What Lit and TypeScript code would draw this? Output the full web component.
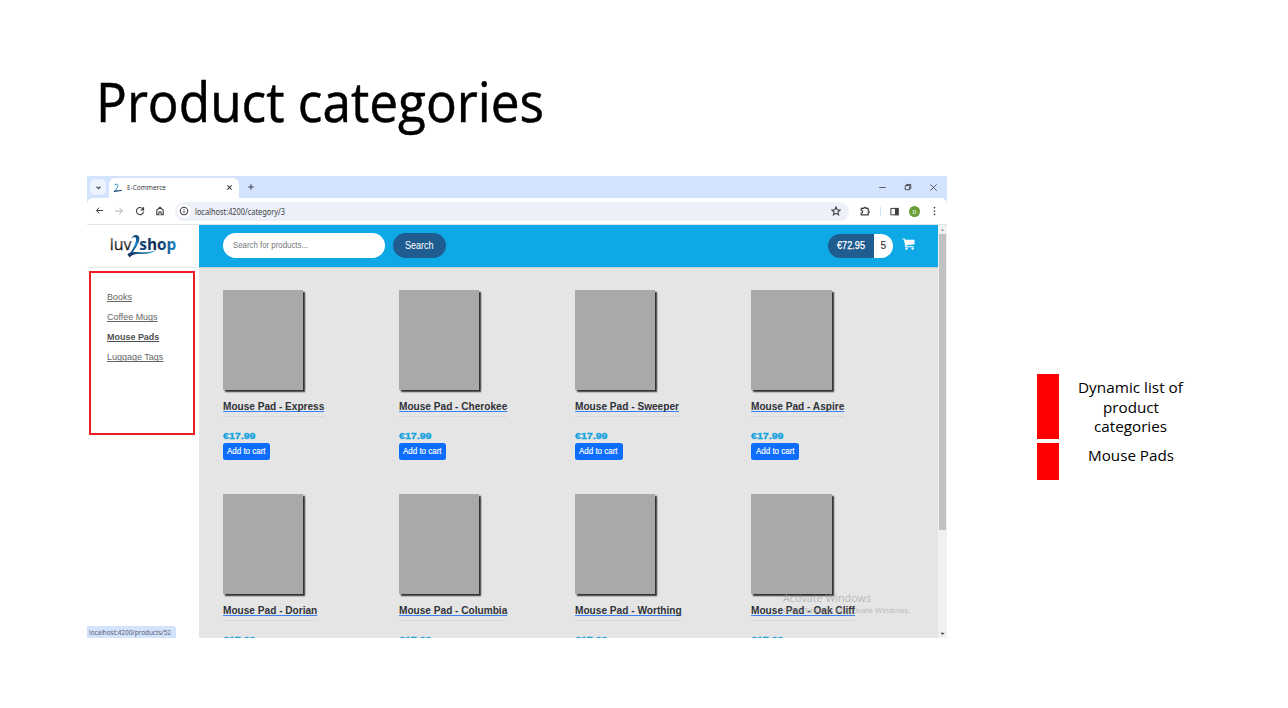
import { LitElement, html, css, svg } from "lit";
import { customElement, property } from "lit/decorators.js";

/** One line of text, condensed or widened to a known width. */
@customElement("fit-text")
class FitText extends LitElement {
  @property() text = "";
  @property({ type: Number }) width = 0;
  static styles = css`
    :host { display: inline-block; vertical-align: top; white-space: nowrap; }
    .t { display: inline-block; transform-origin: 0 50%; text-decoration: inherit; }
  `;
  updated() {
    this.style.width = this.width + "px";
    const t = this.renderRoot.querySelector(".t") as HTMLElement;
    t.style.transform = "none";
    const w = t.getBoundingClientRect().width;
    if (w) t.style.transform = `scaleX(${this.width / w})`;
  }
  render() {
    return html`<span class="t">${this.text}</span>`;
  }
}

const fit = (text: string, width: number, cls = "") =>
  html`<fit-text class=${cls} .text=${text} .width=${width}></fit-text>`;

@customElement("browser-chrome")
class BrowserChrome extends LitElement {
  static styles = css`
    :host { display: block; font-family: "Noto Sans", sans-serif; color: #3c4043; }
    svg { display: block; flex: none; }
    .tabs { height: 22px; background: #d3e3fd; display: flex; align-items: flex-end; box-sizing: border-box; }
    .menu { width: 16px; height: 16px; border-radius: 5px; background: #ecf3fe; margin: 0 3px 3px 3px; display: grid; place-items: center; }
    .tab { width: 130px; height: 20px; background: #fff; border-radius: 6px 6px 0 0; display: flex; align-items: center; box-sizing: border-box; padding: 0 5px 1px 4px; }
    .name { font-size: 7px; line-height: 10px; margin-left: 4px; margin-right: auto; }
    .plus { margin: 0 0 7px 8px; }
    .win { margin-left: auto; margin-right: 9px; height: 22px; display: flex; align-items: center; gap: 17px; }
    .bar { background: #fff; border-bottom: 1px solid #dfe3ea; display: flex; align-items: center; padding: 0 8px; box-sizing: border-box; height: 27px; border-radius: 6px 6px 0 0; }
    .nav { display: flex; gap: 10.3px; width: 80px; }
    .omni { width: 674px; height: 19px; border-radius: 10px; background: #edf0f9; display: flex; align-items: center; padding: 0 8px 0 2px; box-sizing: border-box; }
    .info { width: 14px; height: 14px; border-radius: 50%; background: #fff; display: grid; place-items: center; }
    .url { font-size: 8px; line-height: 11px; margin-left: 4px; margin-right: auto; }
    .right { display: flex; align-items: center; flex: 1; justify-content: flex-end; }
    .sep { width: 1px; height: 9px; background: #cfe0fb; margin: 0 9px 0 10px; }
    .av { width: 11px; height: 11px; border-radius: 50%; background: #689f38; color: #fff; font: 6px/11px Roboto, sans-serif; text-align: center; margin: 0 13px 0 10px; }
    .dots { margin-right: 3px; }
  `;
  render() {
    const s = (d: string, w = 10, sw = 1.1, c = "#3c4043") => html`<svg width=${w} height=${w} viewBox="0 0 10 10" fill="none" stroke=${c} stroke-width=${sw}>${svg`<path d=${d} />`}</svg>`;
    return html`
      <div class="tabs">
        <div class="menu">${s("M2.8 4 5 6.2 7.2 4", 9, 1.3)}</div>
        <div class="tab">
          <svg width="10" height="10" viewBox="0 0 10 10" fill="none" stroke-linecap="round">
            <path d="M2 1.5C4.5.4 5.6 1.6 4.6 3.8 4 5.2 3 6.6 1.6 8.2" stroke="#2a8fcb" stroke-width="1" />
            <path d="M1.4 8.5C3.2 7.2 5 8.6 8.4 7.2" stroke="#163f73" stroke-width="1.1" />
          </svg>
          ${fit("E-Commerce", 39, "name")}
          ${s("M2.6 2.6 7.4 7.4M7.4 2.6 2.6 7.4", 9, 1.2)}
        </div>
        <div class="plus">${s("M5 1.5V8.5M1.5 5H8.5", 8, 1.2)}</div>
        <div class="win">
          ${s("M1.4 5H8.6", 9, 0.9)}
          ${s("M1.6 3.2H7V8.4H1.6ZM3.2 3.2V1.8H8.5V7H7", 8, 1.1)}
          ${s("M1.5 1.5 8.5 8.5M8.5 1.5 1.5 8.5", 9, 0.9)}
        </div>
      </div>
      <div class="bar">
        <div class="nav">
          ${s("M9 5H1.6M4.7 1.8 1.5 5 4.7 8.2", 9)}
          ${s("M1 5H8.4M5.3 1.8 8.5 5 5.3 8.2", 10, 0.9, "#a3a6aa")}
          ${s("M8.2 3.4A3.6 3.6 0 1 0 8.6 5.5M8.6 1V3.9H5.7", 10)}
          ${s("M1.8 8.8V4L5 1.3 8.2 4V8.8H6.1V6H3.9V8.8Z", 10)}
        </div>
        <div class="omni">
          <div class="info"><svg width="10" height="10" viewBox="0 0 10 10"><circle cx="5" cy="5" r="3.7" fill="#fff" stroke="#3c4043" stroke-width="1.1" /><path d="M5 4.6V7M5 2.9V3.8" stroke="#3c4043" stroke-width="1.1" /></svg></div>
          ${fit("localhost:4200/category/3", 90, "url")}
          ${s("M5 1 6.2 3.7 9.1 4 6.9 6 7.6 8.8 5 7.3 2.4 8.8 3.1 6 .9 4 3.8 3.7Z", 10, 1.1)}
        </div>
        <div class="right">
          ${s("M1.2 2.3H3.8C3.8.9 6 .9 6 2.3H8.2V4.6C9.6 4.6 9.6 6.7 8.2 6.7V8.9H1.2V7C3.2 7 3.2 4.3 1.2 4.3Z", 10, 1.2)}
          <div class="sep"></div>
          <svg width="9" height="9" viewBox="0 0 9 9"><rect x=".9" y="1.4" width="7.2" height="6.4" fill="#fff" stroke="#3c4043" /><path d="M5 1H8.6V8.2H5Z" fill="#3c4043" /></svg>
          <div class="av">D</div>
          <svg class="dots" width="3" height="10" viewBox="0 0 3 10" fill="#3c4043"><circle cx="1.5" cy="1.6" r=".85" /><circle cx="1.5" cy="5" r=".85" /><circle cx="1.5" cy="8.4" r=".85" /></svg>
        </div>
      </div>
    `;
  }
}

const products: [string, number][] = [
  ["Express", 101.3], ["Cherokee", 108.3], ["Sweeper", 104], ["Aspire", 93.3],
  ["Dorian", 94.3], ["Columbia", 108.3], ["Worthing", 106.6], ["Oak Cliff", 104],
];
const categories: [string, number][] = [
  ["Books", 25], ["Coffee Mugs", 50.5], ["Mouse Pads", 52.3], ["Luggage Tags", 56.3],
];

@customElement("shop-page")
class ShopPage extends LitElement {
  static styles = css`
    :host { position: relative; display: grid; grid-template-columns: 112px 739px 9px; height: 413px; overflow: hidden; font-family: "Liberation Sans", Arial, sans-serif; }
    svg { display: block; }
    .side { background: #fff; display: flex; flex-direction: column; }
    .logo { height: 42.5px; box-sizing: border-box; border-bottom: 1px solid #e9e9e9; }
    .cats { margin: 3.5px 0 0 2px; width: 106px; height: 163.5px; box-sizing: border-box; border: 2px solid #ee1c23; padding: 14px 0 0 15.5px; color: #666; font-size: 9px; line-height: 20.2px; display: flex; flex-direction: column; align-items: flex-start; }
    .link { height: 20.1px; text-decoration: underline; text-decoration-thickness: 1px; text-underline-offset: 1px; text-decoration-skip-ink: none; }
    .active { font-weight: bold; color: #505050; }
    .status { margin-top: auto; height: 12.5px; width: 89px; box-sizing: border-box; padding: 1px 0 0 2px; background: #d3e3fd; border-radius: 0 3px 0 0; font: 6.8px/11px "Noto Sans", sans-serif; color: #55606e; }
    .main { background: #e5e5e5; overflow: hidden; }
    .head { height: 42px; background: #0fa8e6; display: flex; align-items: center; box-shadow: 0 1px 1px #c9cfd2; padding-left: 23.5px; position: relative; box-sizing: border-box; padding-bottom: 0.6px; }
    .input { width: 162.3px; height: 25px; border-radius: 13px; background: #fff; color: #777; font-size: 9px; line-height: 24px; padding-left: 10px; box-sizing: border-box; }
    .btn { width: 53.5px; height: 25px; border-radius: 13px; background: #1f5c8f; color: #fff; font-size: 10px; line-height: 25px; text-align: center; margin-left: 8px; }
    .total { margin-left: auto; height: 24px; width: 65px; border-radius: 12px; overflow: hidden; display: flex; font-size: 10px; line-height: 24px; margin-right: 9px; }
    .sum { width: 45.5px; background: #1f5c8f; color: #fff; text-align: center; -webkit-text-stroke: 0.25px #fff; }
    .sum fit-text { margin-left: 1px; }
    .qty { flex: 1; background: #fff; color: #222; text-align: center; }
    .cart { margin-right: 23px; margin-bottom: 3px; }
    .grid { display: grid; grid-template-columns: repeat(4, 176.2px); grid-auto-rows: 204px; padding: 23px 0 0 23.5px; }
    .pic { width: 80.5px; height: 100.3px; background: #a9a9a9; box-shadow: 1.7px 1.7px 1.3px #333; }
    .title { display: block; font-weight: bold; font-size: 10.2px; line-height: 12px; margin-top: 10.7px; color: #303338; border-bottom: 1px solid #dadada; height: 15px; }
    .name { text-decoration: underline; text-decoration-color: #3b82f6; text-decoration-thickness: 1px; text-underline-offset: 1px; text-decoration-skip-ink: none; }
    .price { font-weight: bold; font-size: 9.7px; line-height: 11px; margin-top: 12.8px; color: #17a2dc; -webkit-text-stroke: 0.35px #17a2dc; }
    .add { width: 47.7px; height: 17px; margin-top: 2.6px; border-radius: 2.5px; background: #0d6efd; color: #fff; font-size: 8.8px; line-height: 16.6px; text-align: center; -webkit-text-stroke: 0.15px #fff; }
    .scroll { background: #f1f1f1; display: flex; flex-direction: column; align-items: center; justify-content: space-between; }
    .thumb { width: 7px; height: 296px; background: #c1c1c1; margin-bottom: auto; }
    .mark { position: absolute; left: 696px; top: 365px; color: rgba(150, 150, 150, 0.6); font-family: "Open Sans", sans-serif; }
    .m1 { font-size: 11px; line-height: 15px; height: 15px; }
    .m2 { font-size: 7.5px; line-height: 11px; height: 11px; }
  `;
  render() {
    return html`
      <div class="side">
        <div class="logo">
          <svg width="112" height="41" viewBox="87 225 112 41">
            <defs>
              <linearGradient id="l" x1="0" y1="0" x2="0" y2="1"><stop offset=".2" stop-color="#777" /><stop offset=".75" stop-color="#111" /></linearGradient>
              <linearGradient id="s" gradientUnits="userSpaceOnUse" x1="140" y1="0" x2="176" y2="0"><stop offset="0" stop-color="#0f4d86" /><stop offset=".45" stop-color="#0a2350" /><stop offset="1" stop-color="#1c88c8" /></linearGradient>
              <linearGradient id="t" x1="0" y1="0" x2="0" y2="1"><stop offset="0" stop-color="#0b3a70" /><stop offset=".45" stop-color="#1c86c6" /><stop offset="1" stop-color="#0b2a58" /></linearGradient>
              <linearGradient id="u" x1="0" y1="0" x2="1" y2="0"><stop offset="0" stop-color="#0b2a58" /><stop offset="1" stop-color="#49ade0" /></linearGradient>
            </defs>
            <text x="109.8" y="249.7" font-family="Open Sans, sans-serif" font-size="17.2" textLength="21.8" lengthAdjust="spacingAndGlyphs" fill="url(#l)" stroke="url(#l)" stroke-width=".25">luv</text>
            <text x="139.3" y="249.7" font-family="Open Sans, sans-serif" font-weight="700" font-size="16.6" textLength="37" lengthAdjust="spacingAndGlyphs" fill="url(#s)">shop</text>
            <path d="M131 239C132.5 235.6 135.8 233.9 138 235.6 141.4 238.6 138.4 245 131.8 253.4L128.6 255.6C133.6 248.6 137.4 240.6 135.6 237.6 134.4 236.2 132.8 237.2 131 239Z" fill="url(#t)" />
            <path d="M127.4 254.2C131.6 251.2 136 252 141 252.2 147 252.6 150.6 251.8 156 250.6 151.4 253.6 147 254.2 141.6 254 136.4 253.8 133 253.6 129.6 257.4Z" fill="url(#u)" />
          </svg>
        </div>
        <div class="cats">
          ${categories.map(([n, w]) => fit(n, w, n === "Mouse Pads" ? "link active" : "link"))}
        </div>
        <div class="status">${fit("localhost:4200/products/52", 82)}</div>
      </div>
      <div class="main">
        <div class="head">
          <div class="input">${fit("Search for products...", 75)}</div>
          <div class="btn">${fit("Search", 28.5)}</div>
          <div class="total"><div class="sum">${fit("€72.95", 28)}</div><div class="qty">5</div></div>
          <svg class="cart" width="13" height="12" viewBox="0 0 13 12"><path d="M.5.4H2.7L3.1 1.7H12.5V6.2L4.3 7.2 4.5 8.2H11.6V9.3H3.4L1.9 1.5H.5Z" fill="#fff" /><circle cx="4.5" cy="10.6" r="1.2" fill="#fff" /><circle cx="10.7" cy="10.6" r="1.2" fill="#fff" /></svg>
        </div>
        <div class="grid">
          ${products.map(([n, w], i) => html`<div>
            <div class="pic"></div>
            <div class="title" style="width:${w}px">${fit("Mouse Pad - " + n, w, "name")}</div>
            <div class="price">${fit("€17.99", 32.5)}</div>
            ${i < 4 ? html`<div class="add">${fit("Add to cart", 38.5)}</div>` : ""}
          </div>`)}
        </div>
      </div>
      <div class="scroll">
        <svg width="9" height="9" viewBox="0 0 9 9"><path d="M2.7 5.8 4.5 3.7 6.3 5.8Z" fill="#999" /></svg>
        <div class="thumb"></div>
        <svg width="9" height="9" viewBox="0 0 9 9"><path d="M2.5 3.7 4.5 5.9 6.5 3.7Z" fill="#444" /></svg>
      </div>
      <div class="mark">
        <div class="m1">${fit("Activate Windows", 88)}</div>
        <div class="m2">${fit("Go to Settings to activate Windows.", 127)}</div>
      </div>
    `;
  }
}

@customElement("app-root")
class AppRoot extends LitElement {
  static styles = css`
    :host { display: block; width: 1288px; height: 708px; background: #fff; overflow: hidden; color: #000; font-family: "Open Sans", sans-serif; }
    h1 { margin: 0; box-sizing: border-box; height: 176px; padding: 64px 0 0 96px; font-weight: 400; font-size: 54.6px; line-height: 74px; -webkit-text-stroke: 0.5px #000; }
    .body { display: flex; padding-left: 87px; }
    .browser { width: 860px; height: 462px; flex: none; background: #d3e3fd; }
    .notes { margin: 198px 0 0 89.6px; display: grid; grid-template-columns: 22.7px 143px; grid-template-rows: 65px 36.5px; row-gap: 4px; font-size: 15px; line-height: 19.5px; }
    .key { background: #f00; }
    .note { display: flex; flex-direction: column; align-items: center; padding-top: 4px; }
    .note.b { padding-top: 2.5px; }
  `;
  render() {
    return html`
      <h1>${fit("Product categories", 448)}</h1>
      <div class="body">
        <div class="browser">
          <browser-chrome></browser-chrome>
          <shop-page></shop-page>
        </div>
        <div class="notes">
          <div class="key"></div>
          <div class="note">${fit("Dynamic list of", 105)}${fit("product", 56)}${fit("categories", 73)}</div>
          <div class="key"></div>
          <div class="note b">${fit("Mouse Pads", 86)}</div>
        </div>
      </div>
    `;
  }
}
